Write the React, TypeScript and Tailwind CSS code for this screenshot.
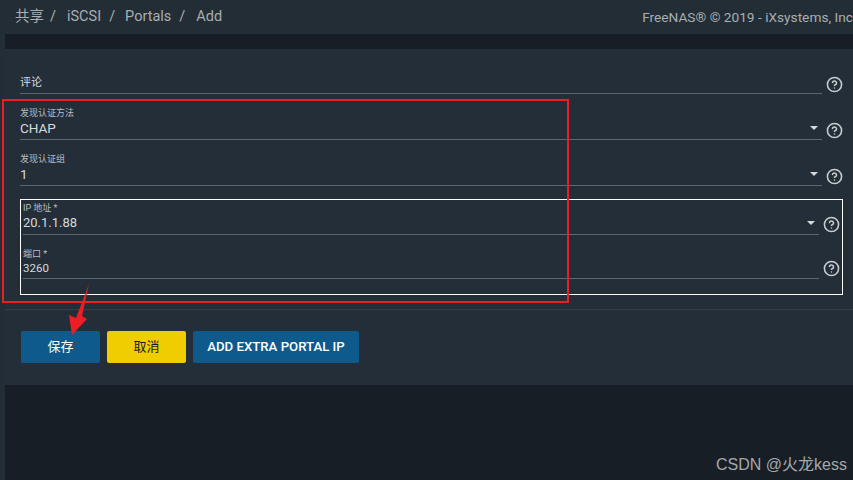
import { CircleHelp } from 'lucide-react';

const sans = "font-['Roboto','Noto_Sans_CJK_SC',sans-serif]";

function Help() {
  return <CircleHelp className='w-[17px] h-[17px] text-[#c8cccf] shrink-0' strokeWidth={2.2} />;
}

function Caret() {
  return <div className='w-0 h-0 border-x-[4px] border-x-transparent border-t-[4px] border-t-[#d5d8da] mb-[9px] mr-[4px]' />;
}

type FieldProps = {
  label?: string;
  value?: string;
  select?: boolean;
  size?: string;
  helpPad?: string;
};

function Field({ label, value, select, size = 'text-[13.5px] leading-[22px]', helpPad = 'pb-[1px]' }: FieldProps) {
  return (
    <div className='flex items-end'>
      <div className='flex-1 border-b border-[#5f676d] h-[35px] flex flex-col justify-end'>
        {label && <div className='text-[9px] leading-[11px] -mb-[2px] text-[#b9bdc0]'>{label}</div>}
        <div className='flex items-end justify-between'>
          <span className={`${size} text-[#d6d9db]`}>{value}</span>
          {select && <Caret />}
        </div>
      </div>
      <div className={`w-[23px] flex justify-center pl-[1px] ${helpPad}`}>
        <Help />
      </div>
    </div>
  );
}

export default function App() {
  return (
    <div className={`relative w-[853px] h-[480px] overflow-hidden bg-[#232d35] ${sans}`}>
      <header className='h-[34px] flex items-center justify-between pl-[15px] text-[#a9aeb2] bg-[#232d35]'>
        <div className='flex text-[14.5px]'>
          <span>共享</span><span className='ml-[6px]'>/</span>
          <span className='ml-[11px]'>iSCSI</span><span className='ml-[8px]'>/</span>
          <span className='ml-[10px]'>Portals</span><span className='ml-[8px]'>/</span>
          <span className='ml-[11px]'>Add</span>
        </div>
        <span className='text-[13.7px] whitespace-nowrap'>FreeNAS® © 2019 - iXsystems, Inc</span>
      </header>

      <div className='ml-[5px] h-[446px] bg-[#171e26] pt-[15px]'>
        <main className='h-[336px] bg-[#242e38]'>
          <div className='pl-[15px] pr-[8px] pt-[10px] flex flex-col gap-[11px] h-[260px]'>
            <Field value='评论' size='text-[11px] leading-[20px]' />
            <Field label='发现认证方法' value='CHAP' select />
            <Field label='发现认证组' value='1' select />
          </div>
          <div className='border-t border-[#333d45] flex gap-[7px] pl-[16px] pt-[21px]'>
            <button className='w-[79px] h-[32px] rounded-[2px] bg-[#0f5a8c] text-white text-[13px]'>保存</button>
            <button className='w-[79px] h-[32px] rounded-[2px] bg-[#f0cd00] text-[#1b1b1b] text-[13px]'>取消</button>
            <button className='w-[166px] h-[32px] rounded-[2px] bg-[#0f5a8c] text-white text-[13.2px] font-medium'>ADD EXTRA PORTAL IP</button>
          </div>
        </main>
      </div>

      {/* white box drawn over the page */}
      <div className='absolute left-[20px] top-[199px] w-[823px] h-[96px] border border-white pl-[1px]'>
        <div className='pl-[1px] flex flex-col gap-[9px]'>
          <Field label='IP 地址 *' value='20.1.1.88' select size='text-[13px] leading-[22px]' helpPad='pb-[2px]' />
          <Field label='端口 *' value='3260' size='text-[11.5px] leading-[20px]' helpPad='pb-[2px]' />
        </div>
      </div>

      {/* red annotation */}
      <div className='absolute left-[2px] top-[99px] w-[567px] h-[204px] border-2 border-[#ee1c25]' />
      <svg className='absolute left-[66px] top-[282px]' width='26' height='56' viewBox='0 0 26 56'>
        <path d='M23 2 L16 34 L21 37 L6 53 L3 33 L10 36 Z' fill='#ee1c25' />
      </svg>

      <div className="absolute left-[716px] top-[455px] text-[16px] leading-[20px] text-[#a6a8aa] font-['Liberation_Sans','Noto_Sans_CJK_SC',sans-serif] whitespace-nowrap">
        CSDN @火龙kess
      </div>
    </div>
  );
}
